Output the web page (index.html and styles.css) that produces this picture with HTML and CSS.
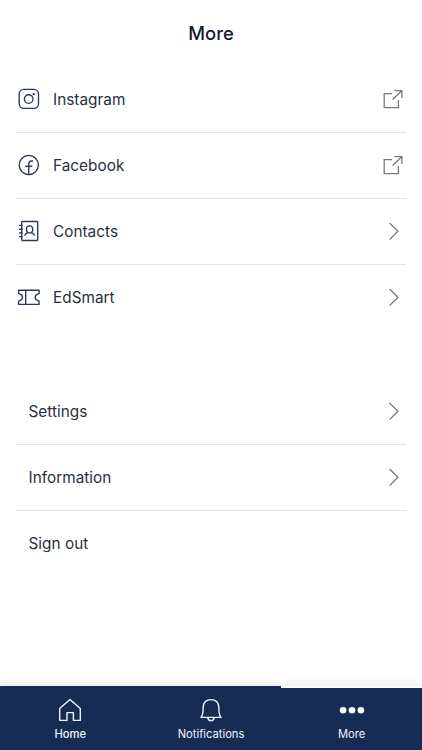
FILE: index.html
```html
<!DOCTYPE html>
<html lang="en">
<head>
<meta charset="utf-8">
<title>More</title>
<link rel="stylesheet" href="styles.css">
</head>
<body>
<svg class="defs" width="0" height="0">
  <symbol id="chevron" viewBox="0 0 20 20"><path d="M6.6 2l8.3 8.3-8.3 8.3"/></symbol>
  <symbol id="external" viewBox="0 0 20 20"><path d="M9 4.7H1.2v14h14.2v-7.6M9.6 10.5L18.8 1.7M11.4 1.6h7.5V9"/></symbol>
</svg>
<div class="app">
  <header class="header"><h1>More</h1></header>
  <main class="content">
    <nav class="menu">
      <a class="row"><svg class="icon" viewBox="0 0 24 24"><rect x="2.2" y="2.4" width="19.3" height="19" rx="4.6"/><circle cx="11.7" cy="12" r="4.3"/><circle class="dot" cx="16.7" cy="7.1" r="1.2"/></svg><span class="label">Instagram</span><svg class="action"><use href="#external"/></svg></a>
      <a class="row"><svg class="icon" viewBox="0 0 24 24"><circle cx="11.8" cy="12" r="9.6"/><path d="M11.8 21.4V10.9q0-2.9 2.7-2.9h1.6M8.3 13.2h7"/></svg><span class="label">Facebook</span><svg class="action"><use href="#external"/></svg></a>
      <a class="row"><svg class="icon" viewBox="0 0 24 24"><rect x="4.7" y="2.5" width="16" height="19" rx=".7"/><path d="M2 6.4h3.7M2 10.2h3.7M2 13.9h3.7M2 17.6h3.7M7.6 16.6q.6-2.4 3.3-3M17.6 16.6q-.6-2.4-3.3-3"/><ellipse cx="12.6" cy="10.4" rx="3.1" ry="3.5"/></svg><span class="label">Contacts</span><svg class="action"><use href="#chevron"/></svg></a>
      <a class="row"><svg class="icon" viewBox="0 0 24 24"><path d="M1.6 5.2h20.5v3.3l-1.4.6a3.3 3.3 0 0 0 0 6.4l1.4.6v3.3H1.6v-3.3l1.4-.6a3.3 3.3 0 0 0 0-6.4l-1.4-.6zM8.7 5.2v14.2"/></svg><span class="label">EdSmart</span><svg class="action"><use href="#chevron"/></svg></a>
    </nav>
    <nav class="menu account">
      <a class="row"><span class="label">Settings</span><svg class="action"><use href="#chevron"/></svg></a>
      <a class="row"><span class="label">Information</span><svg class="action"><use href="#chevron"/></svg></a>
      <a class="row"><span class="label">Sign out</span></a>
    </nav>
  </main>
  <footer class="tabs">
    <a class="tab home"><svg class="tab-icon" viewBox="0 0 24 24"><path d="M1.7 10.6L12 1.4l10.3 9.2v11.8h-6.9v-7.8H9v7.8H1.7z"/></svg><span>Home</span></a>
    <a class="tab"><svg class="tab-icon" viewBox="0 0 24 24"><path d="M2 19.4C4.5 16.2 4 12 4.2 9.1c.3-4.9 3.4-7.5 7.8-7.5s7.5 2.6 7.8 7.5c.2 2.9-.3 7.1 2.2 10.3zM8.8 19.6c.4 4 6 4 6.4 0"/></svg><span>Notifications</span></a>
    <a class="tab active"><svg class="tab-icon more" viewBox="0 0 24 24"><circle cx="3.1" cy="12.2" r="3.3"/><circle cx="12" cy="12.2" r="3.3"/><circle cx="20.9" cy="12.2" r="3.3"/></svg><span>More</span></a>
  </footer>
</div>
</body>
</html>
```
FILE: styles.css
```css
* { box-sizing: border-box; }
body { margin: 0; background: #fff; color: #292f3c; font-family: Inter, "Liberation Sans", sans-serif; }
.defs { position: absolute; }
.app { height: 750px; display: flex; flex-direction: column; overflow: hidden; }
.header { height: 66.8px; flex: none; display: flex; justify-content: center; }
h1 { margin: 0; font-size: 18.4px; line-height: 66px; font-weight: 500; color: #151a2b; letter-spacing: 0; }
.content { flex: 1; padding: 0 16px; }
.row { height: 66.2px; display: flex; align-items: center; padding: 0 2.6px 0 1px; border-bottom: 1px solid #e4e5e7; }
.row:last-child { border-bottom-color: transparent; }
.label { flex: 1; padding-top: .6px; font-size: 15.3px; line-height: 20px; letter-spacing: .04px; }
.icon { width: 24px; height: 24px; margin: 0 12px 1.2px 0; fill: none; stroke: #2b385b; stroke-width: 1.35; stroke-linejoin: round; }
.icon .dot { fill: #2b385b; stroke: none; }
.action { width: 20px; height: 20px; margin-bottom: 1.2px; fill: none; stroke: #777a82; stroke-width: 1.3; }
.account { margin-top: 47.3px; }
.account .row { padding-left: 12.5px; }
.tabs { height: 64px; flex: none; display: grid; grid-template-columns: repeat(3, 1fr); box-shadow: 0 -2px 8px rgba(0, 0, 0, .09); background: #162c54; }
.tab { display: flex; flex-direction: column; align-items: center; padding-top: 11px; border-top: 1px solid #162c54; color: #eff4fc; font-size: 11.2px; line-height: 14px; letter-spacing: 0; }
.active { border-top: 2px solid #fff; padding-top: 10px; }
.home { font-weight: 500; }
.tab-icon { width: 24px; height: 24px; margin-bottom: 5px; fill: none; stroke: #eff4fc; stroke-width: 1.4; stroke-linejoin: round; }
.more { fill: #fff; stroke: none; overflow: visible; }
```
